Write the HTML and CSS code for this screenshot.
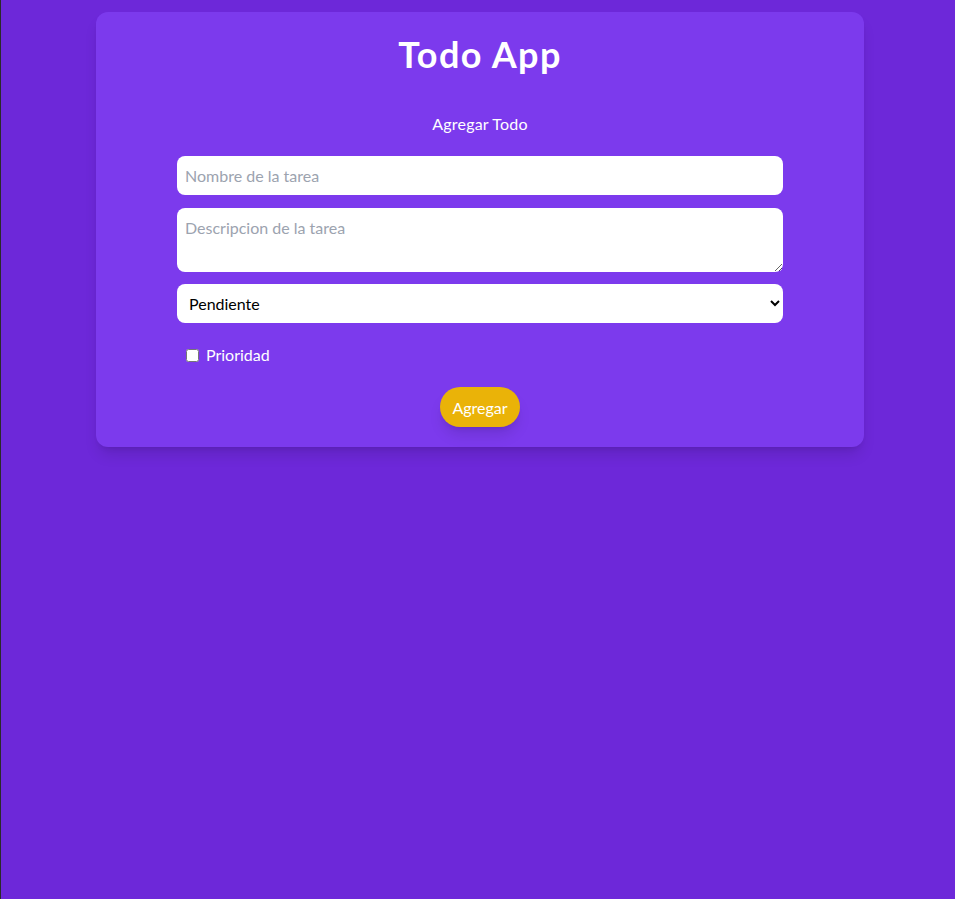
FILE: index.html
```html
<!DOCTYPE html>
<html lang="es">
<head>
<meta charset="utf-8">
<title>Todo App</title>
<link rel="stylesheet" href="styles.css">
</head>
<body>
<div class="page">
  <main class="card">
    <h1 class="title">Todo App</h1>
    <h2 class="subtitle">Agregar Todo</h2>
    <form class="form">
      <input class="field input" type="text" placeholder="Nombre de la tarea">
      <textarea class="field textarea" placeholder="Descripcion de la tarea"></textarea>
      <select class="field select">
        <option>Pendiente</option>
        <option>Completado</option>
      </select>
      <label class="check"><input type="checkbox" class="checkbox"> Prioridad</label>
      <div class="actions">
        <button type="button" class="btn">Agregar</button>
      </div>
    </form>
  </main>
</div>
</body>
</html>
```
FILE: styles.css
```css
* { box-sizing: border-box; }
html, body { margin: 0; padding: 0; }
body {
  background: #6d28d9;
  min-height: 899px;
  border-left: 1px solid #2b2b2b;
  font-family: Lato, "Open Sans", sans-serif;
  color: #fff;
}
.page {
  display: flex;
  justify-content: center;
  padding: 12px 0 0 4px;
}
.card {
  width: 768px;
  background: #7c3aed;
  border-radius: 12px;
  padding: 22px 0 20px;
  box-shadow: 0 10px 15px -3px rgba(0,0,0,0.12), 0 4px 6px -4px rgba(0,0,0,0.12);
  display: flex;
  flex-direction: column;
  align-items: center;
}
.title {
  margin: 0;
  font-size: 36px;
  line-height: 40px;
  font-weight: 700;
  letter-spacing: 1.4px;
  text-align: center;
}
.subtitle {
  margin: 38px 0 0;
  font-size: 16px;
  line-height: 24px;
  font-weight: 400;
  letter-spacing: 0.2px;
  text-align: center;
}
.form {
  width: 606px;
  margin-top: 20px;
  display: flex;
  flex-direction: column;
}
.field {
  display: block;
  width: 100%;
  border: none;
  border-radius: 8px;
  background: #fff;
  font-family: Lato, "Open Sans", sans-serif;
  font-size: 16px;
  color: #000;
  padding: 0 8px;
  outline: none;
}
.field::placeholder { color: #9ca3af; }
.input { height: 39px; }
.textarea {
  height: 64px;
  margin-top: 13px;
  padding-top: 9px;
  line-height: 22px;
  resize: vertical;
}
.select {
  height: 39px;
  margin-top: 12px;
  padding-left: 8px;
}
.check {
  display: flex;
  align-items: center;
  margin-top: 20px;
  padding-left: 5px;
  font-size: 16px;
  line-height: 24px;
  gap: 4px;
}
.checkbox {
  margin: 3px 3px 3px 4px;
  width: 13px;
  height: 13px;
}
.actions {
  display: flex;
  justify-content: center;
  margin-top: 20px;
}
.btn {
  width: 80px;
  height: 40px;
  border: none;
  border-radius: 9999px;
  background: #eab308;
  color: #fff;
  font-family: Lato, "Open Sans", sans-serif;
  font-size: 16px;
  box-shadow: 0 10px 15px -3px rgba(0,0,0,0.12), 0 4px 6px -4px rgba(0,0,0,0.12);
  cursor: pointer;
}
```
